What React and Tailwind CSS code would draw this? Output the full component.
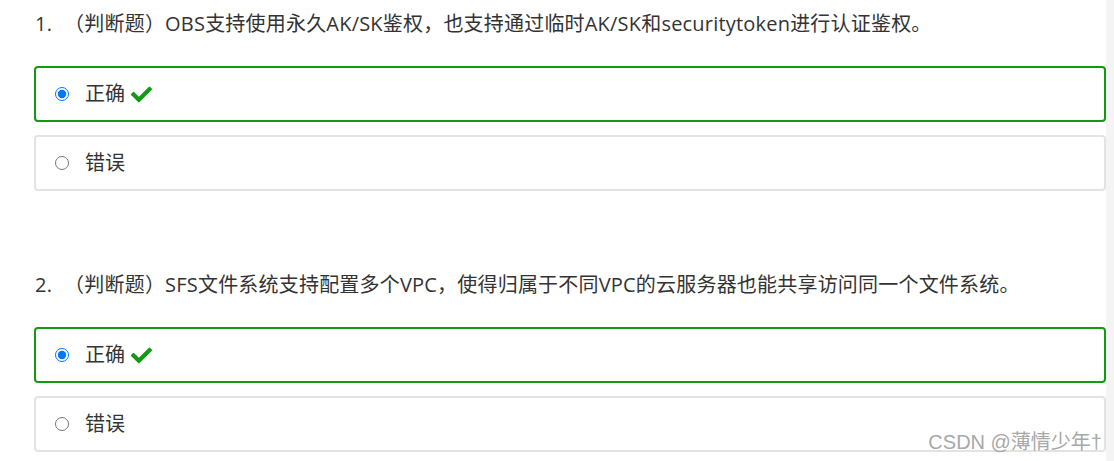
import { FaCheck } from 'react-icons/fa';

const questions = [
  {
    no: '1.',
    text: '（判断题）OBS支持使用永久AK/SK鉴权，也支持通过临时AK/SK和securitytoken进行认证鉴权。',
  },
  {
    no: '2.',
    text: '（判断题）SFS文件系统支持配置多个VPC，使得归属于不同VPC的云服务器也能共享访问同一个文件系统。',
  },
];

function Option({ label, correct, name }) {
  return (
    <label
      className={
        'flex items-center h-[56px] rounded-[4px] border-2 pl-[19px] ' +
        (correct ? 'border-[#129a12]' : 'border-[#e3e3e3]')
      }
    >
      <input
        type="radio"
        name={name}
        defaultChecked={correct}
        className="w-[14px] h-[14px] accent-[#0075ff]"
      />
      <span className="ml-[16px] text-[20px] leading-[24px] text-[#333]">{label}</span>
      {correct && <FaCheck className="ml-[6px] text-[#129a12]" size={21} />}
    </label>
  );
}

function Question({ q, idx }) {
  return (
    <div className="flex flex-col">
      <p className="pl-[1px] text-[20px] leading-[24px] tracking-[0.2px] text-[#333]">
        <span className="mr-[12px]">{q.no}</span>
        {q.text}
      </p>
      <div className="mt-[30px] flex flex-col gap-[13px]">
        <Option label="正确" correct name={'q' + idx} />
        <Option label="错误" name={'q' + idx} />
      </div>
    </div>
  );
}

export default function App() {
  return (
    <div className="relative flex w-[1114px] h-[461px] bg-white overflow-hidden font-['Segoe_UI','Open_Sans','Noto_Sans_CJK_SC',sans-serif]">
      <div className="flex-1 pl-[34px] pt-[12px] flex flex-col gap-[82px]">
        {questions.map((q, i) => (
          <Question key={i} q={q} idx={i} />
        ))}
      </div>
      <div className="w-[8px] bg-[#f4f4f4]" />
      <span className="absolute right-[12px] bottom-[8px] text-[20px] leading-[22px] text-[#a8a8a8] font-['Liberation_Sans','Noto_Sans_CJK_SC',sans-serif]">
        CSDN @薄情少年†
      </span>
    </div>
  );
}
